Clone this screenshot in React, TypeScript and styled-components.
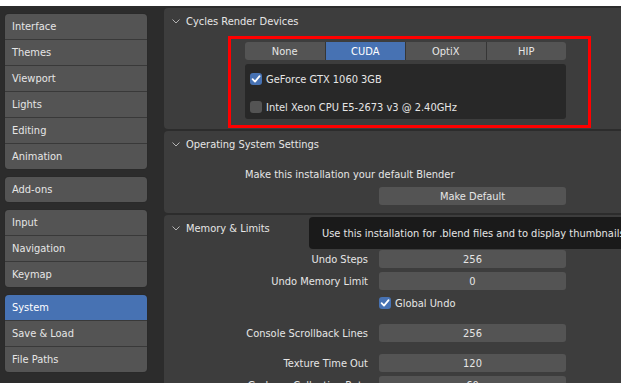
import styled, { createGlobalStyle } from "styled-components";

const GlobalStyle = createGlobalStyle`
  * { box-sizing: border-box; }
  html, body { margin: 0; padding: 0; background: #ffffff; }
  body {
    font-family: "DejaVu Sans", "Liberation Sans", sans-serif;
    font-size: 9.9px;
    color: #e6e6e6;
    overflow: hidden;
  }
`;

const navGroups: { label: string; active?: boolean }[][] = [
  [
    { label: "Interface" },
    { label: "Themes" },
    { label: "Viewport" },
    { label: "Lights" },
    { label: "Editing" },
    { label: "Animation" },
  ],
  [{ label: "Add-ons" }],
  [{ label: "Input" }, { label: "Navigation" }, { label: "Keymap" }],
  [{ label: "System", active: true }, { label: "Save & Load" }, { label: "File Paths" }],
];

const backends = ["None", "CUDA", "OptiX", "HIP"];

const devices = [
  { name: "GeForce GTX 1060 3GB", checked: true },
  { name: "Intel Xeon CPU E5-2673 v3 @ 2.40GHz", checked: false },
];

type Row = { label: string; value?: string; check?: boolean };

const memorySections: Row[][] = [
  [
    { label: "Undo Steps", value: "256" },
    { label: "Undo Memory Limit", value: "0" },
    { label: "Global Undo", check: true },
  ],
  [{ label: "Console Scrollback Lines", value: "256" }],
  [
    { label: "Texture Time Out", value: "120" },
    { label: "Garbage Collection Rate", value: "60" },
  ],
];

function Chevron() {
  return (
    <svg width="8" height="5" viewBox="0 0 8 5">
      <polyline points="0.5,0.5 4,4 7.5,0.5" fill="none" stroke="#b4b4b4" strokeWidth="1" />
    </svg>
  );
}

function CheckBox({ checked }: { checked: boolean }) {
  return (
    <Box $checked={checked}>
      {checked && (
        <svg width="12" height="12" viewBox="0 0 12 12">
          <polyline
            points="2.6,6.2 5,8.6 9.6,3.2"
            fill="none"
            stroke="#ffffff"
            strokeWidth="1.8"
            strokeLinecap="round"
            strokeLinejoin="round"
          />
        </svg>
      )}
    </Box>
  );
}

export default function App() {
  return (
    <>
      <GlobalStyle />
      <Screen>
        <Window>
          <Sidebar>
            {navGroups.map((group, gi) => (
              <NavGroup key={gi}>
                {group.map((item) => (
                  <NavItem key={item.label} $active={item.active}>
                    {item.label}
                  </NavItem>
                ))}
              </NavGroup>
            ))}
          </Sidebar>

          <Main>
            <Panel>
              <PanelHeader>
                <Chevron />
                Cycles Render Devices
              </PanelHeader>
              <Highlight>
                <Tabs>
                  {backends.map((b) => (
                    <Tab key={b} $active={b === "CUDA"}>
                      {b}
                    </Tab>
                  ))}
                </Tabs>
                <DeviceList>
                  {devices.map((d) => (
                    <DeviceRow key={d.name}>
                      <CheckBox checked={d.checked} />
                      {d.name}
                    </DeviceRow>
                  ))}
                </DeviceList>
              </Highlight>
            </Panel>

            <Panel $pad={8}>
              <PanelHeader>
                <Chevron />
                Operating System Settings
              </PanelHeader>
              <Body $top={8}>
                <Line>Make this installation your default Blender</Line>
                <FieldRow>
                  <span />
                  <Field>Make Default</Field>
                </FieldRow>
              </Body>
            </Panel>

            <Panel $pad={8}>
              <PanelHeader>
                <Chevron />
                Memory &amp; Limits
              </PanelHeader>
              <Tooltip>Use this installation for .blend files and to display thumbnails</Tooltip>
              <Body $top={9}>
                <Sections>
                  {memorySections.map((section, si) => (
                    <Section key={si}>
                      {section.map((row) => (
                        <FieldRow key={row.label}>
                          {row.check ? (
                            <>
                              <span />
                              <CheckLabel>
                                <CheckBox checked />
                                {row.label}
                              </CheckLabel>
                            </>
                          ) : (
                            <>
                              <Label>{row.label}</Label>
                              <Field>{row.value}</Field>
                            </>
                          )}
                        </FieldRow>
                      ))}
                    </Section>
                  ))}
                </Sections>
              </Body>
            </Panel>
          </Main>
        </Window>
      </Screen>
    </>
  );
}

const Screen = styled.div`
  height: 383px;
  padding-top: 6px;
  background: #ffffff;
  overflow: hidden;
`;

const Window = styled.div`
  display: flex;
  height: 377px;
  background: #2c2c2c;
  overflow: hidden;
`;

const Sidebar = styled.div`
  width: 164px;
  flex: none;
  display: flex;
  flex-direction: column;
  gap: 8px;
  padding: 8px 17px 0 5px;
`;

const NavGroup = styled.div`
  display: flex;
  flex-direction: column;
  gap: 1px;
  background: #393939;
  border-radius: 4px;
  overflow: hidden;
  box-shadow: 0 0 0 1px #2a2a2a;
`;

const NavItem = styled.div<{ $active?: boolean }>`
  height: 25px;
  display: flex;
  align-items: center;
  padding-left: 7px;
  background: ${(p) => (p.$active ? "#4772b3" : "#545454")};
  color: ${(p) => (p.$active ? "#ffffff" : "#e6e6e6")};
`;

const Main = styled.div`
  flex: 1;
  min-width: 0;
  display: flex;
  flex-direction: column;
  gap: 2px;
  padding-top: 2px;
  overflow: hidden;
`;

const Panel = styled.div<{ $pad?: number }>`
  position: relative;
  flex: none;
  background: #3d3d3d;
  border-radius: 4px 0 0 4px;
  padding-bottom: ${(p) => p.$pad ?? 1}px;
`;

const PanelHeader = styled.div`
  height: 26px;
  display: flex;
  align-items: center;
  gap: 6px;
  padding: 1px 0 0 8px;
  color: #e6e6e6;
`;

const Highlight = styled.div`
  margin: 2px 0 0 64px;
  width: 363px;
  border: 3px solid #ff0000;
  padding: 3px 22px 6px 14px;
`;

const Tabs = styled.div`
  display: grid;
  grid-template-columns: repeat(4, 1fr);
  gap: 1px;
  height: 18px;
  background: #363636;
  border-radius: 3px;
  overflow: hidden;
`;

const Tab = styled.div<{ $active?: boolean }>`
  display: flex;
  align-items: center;
  justify-content: center;
  background: ${(p) => (p.$active ? "#4772b3" : "#545454")};
  color: ${(p) => (p.$active ? "#ffffff" : "#e6e6e6")};
`;

const DeviceList = styled.div`
  margin-top: 4px;
  height: 55px;
  background: #282828;
  border-radius: 3px;
  padding: 3px 5px 0;
  display: flex;
  flex-direction: column;
  gap: 4px;
`;

const DeviceRow = styled.div`
  height: 24px;
  display: flex;
  align-items: center;
  gap: 4px;
`;

const Box = styled.span<{ $checked: boolean }>`
  width: 12px;
  height: 12px;
  flex: none;
  display: inline-flex;
  border-radius: 3px;
  background: ${(p) => (p.$checked ? "#4772b3" : "#545454")};
`;

const Body = styled.div<{ $top: number }>`
  margin: ${(p) => p.$top}px 0 0 81px;
  width: 321px;
  display: flex;
  flex-direction: column;
  gap: 4px;
`;

const Line = styled.div`
  height: 18px;
  display: flex;
  align-items: center;
`;

const Sections = styled.div`
  display: flex;
  flex-direction: column;
  gap: 12px;
`;

const Section = styled.div`
  display: flex;
  flex-direction: column;
  gap: 4px;
`;

const FieldRow = styled.div`
  display: grid;
  grid-template-columns: 123px 187px;
  column-gap: 11px;
  height: 18px;
  align-items: center;
`;

const Label = styled.div`
  text-align: right;
  white-space: nowrap;
`;

const Field = styled.div`
  height: 18px;
  display: flex;
  align-items: center;
  justify-content: center;
  background: #545454;
  border-radius: 3px;
`;

const CheckLabel = styled.div`
  display: flex;
  align-items: center;
  gap: 4px;
`;

const Tooltip = styled.div`
  position: absolute;
  left: 145px;
  top: 2px;
  z-index: 2;
  height: 32px;
  display: flex;
  align-items: center;
  padding: 0 13px;
  white-space: nowrap;
  background: #1a1a1a;
  border-radius: 4px;
  color: #e6e6e6;
`;
